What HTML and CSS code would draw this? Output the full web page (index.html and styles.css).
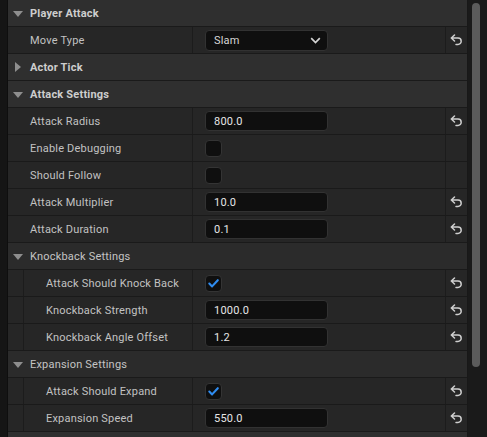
FILE: index.html
```html
<!DOCTYPE html>
<html>
<head>
<meta charset="utf-8">
<link rel="stylesheet" href="styles.css">
</head>
<body>
<div class="app">
  <div class="strip"></div>
  <div class="panel">
    <div class="cat"><span class="tri down"></span><span class="cat-title">Player Attack</span></div>
    <div class="row">
      <div class="name">Move Type</div>
      <div class="value"><div class="combo"><span>Slam</span><svg class="chev" width="11" height="7" viewBox="0 0 11 7"><path d="M1.2 1.2 L5.5 5.5 L9.8 1.2" fill="none" stroke="#d4d4d4" stroke-width="1.7"/></svg></div></div>
      <div class="reset"><svg class="rs" width="13" height="12" viewBox="0 0 13 12"><path d="M4.5 1 L1.3 4 L4.5 7 M1.5 4 H8 A3.2 3.2 0 0 1 8 10.4 H6" fill="none" stroke="#cfcfcf" stroke-width="1.5" stroke-linecap="round" stroke-linejoin="round"/></svg></div>
    </div>
    <div class="cat"><span class="tri right"></span><span class="cat-title">Actor Tick</span></div>
    <div class="cat"><span class="tri down"></span><span class="cat-title">Attack Settings</span></div>
    <div class="row">
      <div class="name">Attack Radius</div>
      <div class="value"><div class="field">800.0</div></div>
      <div class="reset"><svg class="rs" width="13" height="12" viewBox="0 0 13 12"><path d="M4.5 1 L1.3 4 L4.5 7 M1.5 4 H8 A3.2 3.2 0 0 1 8 10.4 H6" fill="none" stroke="#cfcfcf" stroke-width="1.5" stroke-linecap="round" stroke-linejoin="round"/></svg></div>
    </div>
    <div class="row">
      <div class="name">Enable Debugging</div>
      <div class="value"><div class="check"></div></div>
      <div class="reset"></div>
    </div>
    <div class="row">
      <div class="name">Should Follow</div>
      <div class="value"><div class="check"></div></div>
      <div class="reset"></div>
    </div>
    <div class="row">
      <div class="name">Attack Multiplier</div>
      <div class="value"><div class="field">10.0</div></div>
      <div class="reset"><svg class="rs" width="13" height="12" viewBox="0 0 13 12"><path d="M4.5 1 L1.3 4 L4.5 7 M1.5 4 H8 A3.2 3.2 0 0 1 8 10.4 H6" fill="none" stroke="#cfcfcf" stroke-width="1.5" stroke-linecap="round" stroke-linejoin="round"/></svg></div>
    </div>
    <div class="row">
      <div class="name">Attack Duration</div>
      <div class="value"><div class="field">0.1</div></div>
      <div class="reset"><svg class="rs" width="13" height="12" viewBox="0 0 13 12"><path d="M4.5 1 L1.3 4 L4.5 7 M1.5 4 H8 A3.2 3.2 0 0 1 8 10.4 H6" fill="none" stroke="#cfcfcf" stroke-width="1.5" stroke-linecap="round" stroke-linejoin="round"/></svg></div>
    </div>
    <div class="sub"><span class="tri down"></span><span class="sub-title">Knockback Settings</span></div>
    <div class="row">
      <div class="indent"></div>
      <div class="name inner">Attack Should Knock Back</div>
      <div class="value"><div class="check on"><svg width="15" height="15" viewBox="0 0 15 15"><path d="M3.3 7.6 L6.1 10.4 L11.8 4.2" fill="none" stroke="#2f8cf0" stroke-width="2.1" stroke-linecap="round" stroke-linejoin="round"/></svg></div></div>
      <div class="reset"><svg class="rs" width="13" height="12" viewBox="0 0 13 12"><path d="M4.5 1 L1.3 4 L4.5 7 M1.5 4 H8 A3.2 3.2 0 0 1 8 10.4 H6" fill="none" stroke="#cfcfcf" stroke-width="1.5" stroke-linecap="round" stroke-linejoin="round"/></svg></div>
    </div>
    <div class="row">
      <div class="indent"></div>
      <div class="name inner">Knockback Strength</div>
      <div class="value"><div class="field">1000.0</div></div>
      <div class="reset"><svg class="rs" width="13" height="12" viewBox="0 0 13 12"><path d="M4.5 1 L1.3 4 L4.5 7 M1.5 4 H8 A3.2 3.2 0 0 1 8 10.4 H6" fill="none" stroke="#cfcfcf" stroke-width="1.5" stroke-linecap="round" stroke-linejoin="round"/></svg></div>
    </div>
    <div class="row">
      <div class="indent"></div>
      <div class="name inner">Knockback Angle Offset</div>
      <div class="value"><div class="field">1.2</div></div>
      <div class="reset"><svg class="rs" width="13" height="12" viewBox="0 0 13 12"><path d="M4.5 1 L1.3 4 L4.5 7 M1.5 4 H8 A3.2 3.2 0 0 1 8 10.4 H6" fill="none" stroke="#cfcfcf" stroke-width="1.5" stroke-linecap="round" stroke-linejoin="round"/></svg></div>
    </div>
    <div class="sub"><span class="tri down"></span><span class="sub-title">Expansion Settings</span></div>
    <div class="row">
      <div class="indent"></div>
      <div class="name inner">Attack Should Expand</div>
      <div class="value"><div class="check on"><svg width="15" height="15" viewBox="0 0 15 15"><path d="M3.3 7.6 L6.1 10.4 L11.8 4.2" fill="none" stroke="#2f8cf0" stroke-width="2.1" stroke-linecap="round" stroke-linejoin="round"/></svg></div></div>
      <div class="reset"><svg class="rs" width="13" height="12" viewBox="0 0 13 12"><path d="M4.5 1 L1.3 4 L4.5 7 M1.5 4 H8 A3.2 3.2 0 0 1 8 10.4 H6" fill="none" stroke="#cfcfcf" stroke-width="1.5" stroke-linecap="round" stroke-linejoin="round"/></svg></div>
    </div>
    <div class="row">
      <div class="indent"></div>
      <div class="name inner">Expansion Speed</div>
      <div class="value"><div class="field">550.0</div></div>
      <div class="reset"><svg class="rs" width="13" height="12" viewBox="0 0 13 12"><path d="M4.5 1 L1.3 4 L4.5 7 M1.5 4 H8 A3.2 3.2 0 0 1 8 10.4 H6" fill="none" stroke="#cfcfcf" stroke-width="1.5" stroke-linecap="round" stroke-linejoin="round"/></svg></div>
    </div>
    <div class="cat tail"></div>
  </div>
  <div class="scroll"><div class="thumb"></div></div>
</div>
</body>
</html>
```

FILE: styles.css
```css
html, body {
  margin: 0;
  padding: 0;
  background: #151515;
  font-family: Roboto, "Noto Sans", "Liberation Sans", sans-serif;
  font-size: 11px;
  letter-spacing: 0.2px;
}
.app {
  display: flex;
  width: 487px;
  height: 437px;
  overflow: hidden;
}
.strip {
  width: 7px;
  background: #151515;
  border-right: 1px solid #0e0e0e;
  flex: none;
}
.panel {
  width: 459px;
  flex: none;
  background: #232323;
  border-right: 1px solid #181818;
  display: flex;
  flex-direction: column;
}
.cat, .sub {
  height: 26px;
  border-bottom: 1px solid #1a1a1a;
  background: #2f2f2f;
  display: flex;
  align-items: center;
  padding-left: 5px;
  flex: none;
}
.sub {
  background: #2b2b2b;
}
.tail {
  height: 10px;
}
.tri {
  width: 9px;
  height: 9px;
  margin-right: 8px;
  position: relative;
  flex: none;
}
.tri.down::before {
  content: "";
  position: absolute;
  left: -0.5px;
  top: 2px;
  border-left: 5px solid transparent;
  border-right: 5px solid transparent;
  border-top: 6px solid #8e8e8e;
}
.tri.right::before {
  content: "";
  position: absolute;
  left: 2px;
  top: -0.5px;
  border-top: 5px solid transparent;
  border-bottom: 5px solid transparent;
  border-left: 6px solid #8e8e8e;
}
.cat-title {
  color: #cdcdcd;
  font-weight: bold;
}
.sub-title {
  color: #c4c4c4;
}
.row {
  height: 26px;
  border-bottom: 1px solid #1a1a1a;
  background: #262626;
  display: flex;
  flex: none;
}
.indent {
  width: 15px;
  border-right: 1px solid #1c1c1c;
  flex: none;
}
.name {
  width: 162px;
  padding-left: 22px;
  border-right: 1px solid #1c1c1c;
  display: flex;
  align-items: center;
  color: #c2c2c2;
  flex: none;
}
.name.inner {
  width: 146px;
}
.value {
  width: 240px;
  padding-left: 12px;
  border-right: 1px solid #1c1c1c;
  display: flex;
  align-items: center;
  flex: none;
}
.reset {
  flex: 1;
  display: flex;
  align-items: center;
  justify-content: center;
}
.field, .combo {
  box-sizing: border-box;
  width: 123px;
  height: 20px;
  background: #0f0f0f;
  border: 1px solid #323232;
  border-radius: 4px;
  color: #e6e6e6;
  padding-left: 8px;
  display: flex;
  align-items: center;
}
.combo {
  height: 21px;
  justify-content: space-between;
  padding-right: 6px;
  color: #d6d6d6;
}
.check {
  box-sizing: border-box;
  width: 17px;
  height: 17px;
  background: #0f0f0f;
  border: 1px solid #343434;
  border-radius: 4px;
  display: flex;
  align-items: center;
  justify-content: center;
}
.scroll {
  flex: 1;
  background: #1a1a1a;
  padding: 3px 0 0 4px;
}
.thumb {
  width: 8px;
  height: 364px;
  background: #5b5b5b;
  border-radius: 4px;
}
```
